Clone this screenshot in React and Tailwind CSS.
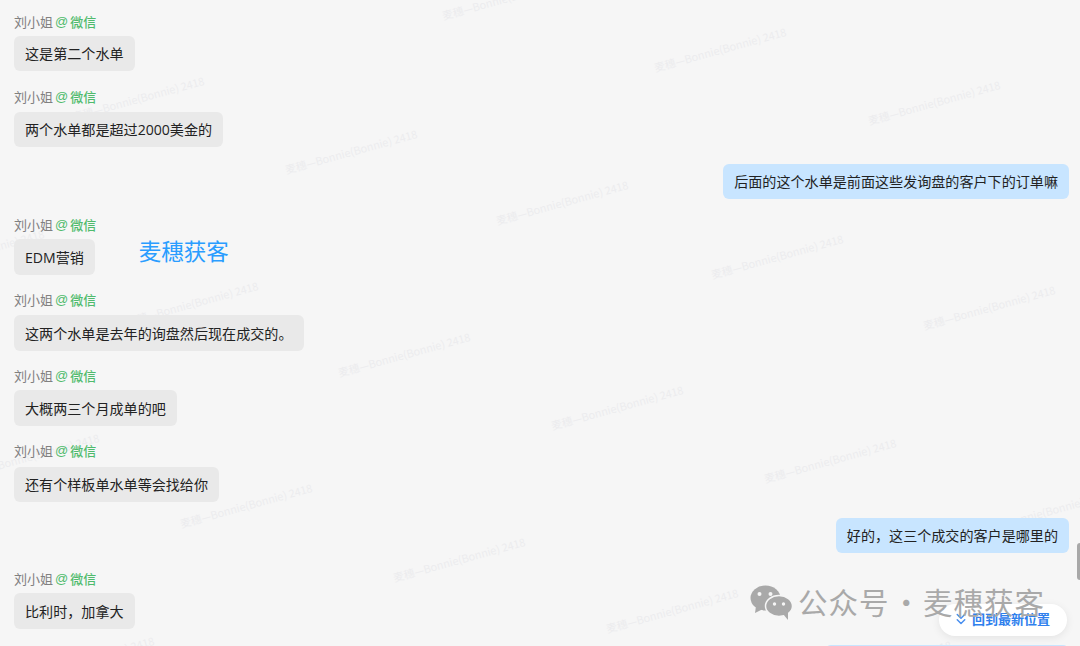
import React from "react";
import { ChevronsDown } from "lucide-react";

const messages = [
  { text: "这是第二个水单", top: "mt-0", gap: "mt-[4px]", h: "h-[35px]" },
  { text: "两个水单都是超过2000美金的", top: "mt-[16px]", gap: "mt-[5px]", h: "h-[35px]" },
  { text: "后面的这个水单是前面这些发询盘的客户下的订单嘛", mine: true, top: "mt-[17px]", h: "h-[35px]" },
  { text: "EDM营销", tag: "麦穗获客", top: "mt-[16px]", gap: "mt-[4px]", h: "h-[36px]" },
  { text: "这两个水单是去年的询盘然后现在成交的。", top: "mt-[15px]", gap: "mt-[5px]", h: "h-[36px]" },
  { text: "大概两三个月成单的吧", top: "mt-[15px]", gap: "mt-[4px]", h: "h-[36px]" },
  { text: "还有个样板单水单等会找给你", top: "mt-[15px]", gap: "mt-[6px]", h: "h-[35px]" },
  { text: "好的，这三个成交的客户是哪里的", mine: true, top: "mt-[16px]", h: "h-[35px]" },
  { text: "比利时，加拿大", top: "mt-[16px]", gap: "mt-[4px]", h: "h-[36px]" },
];

// centres of the tiled watermark
const marks = [
  [508, -3], [720, 49], [934, 102], [138, 98], [351, 151], [562, 202], [777, 256], [989, 307],
  [-22, 251], [192, 303], [404, 354], [617, 407], [830, 460], [1043, 512], [33, 455], [246, 505],
  [459, 559], [672, 610], [885, 662], [88, 658],
];

const Watermark = ({ x, y }) => (
  <div
    className="absolute w-[200px] -ml-[100px] -mt-[9px] h-[18px] leading-[18px] text-center text-[10.8px] text-[#ececee] whitespace-nowrap -rotate-[15.5deg]"
    style={{ left: x, top: y }}
  >
    麦穗—Bonnie(Bonnie) 2418
  </div>
);

const WechatIcon = () => (
  <svg width="44" height="38" viewBox="0 0 44 38" className="shrink-0">
    <ellipse cx="15.5" cy="14" rx="15" ry="12.5" fill="#a9a9a9" />
    <path d="M6 22 L5 29 L13 25 Z" fill="#a9a9a9" />
    <ellipse cx="29" cy="22" rx="13.5" ry="10.5" fill="#a9a9a9" stroke="#f6f6f6" strokeWidth="1.5" />
    <path d="M33 30 L38 36 L38 28 Z" fill="#a9a9a9" />
    <circle cx="9.5" cy="10" r="2" fill="#f6f6f6" />
    <circle cx="20.5" cy="10" r="2" fill="#f6f6f6" />
    <circle cx="24.5" cy="20" r="1.7" fill="#f6f6f6" />
    <circle cx="33.5" cy="20" r="1.7" fill="#f6f6f6" />
  </svg>
);

const Bubble = ({ msg }) => (
  <div
    className={`${msg.h} px-[11px] pt-[1px] flex items-center rounded-md font-['Open_Sans','Noto_Sans_CJK_SC',sans-serif] text-[14.08px] text-[#222] whitespace-nowrap ${
      msg.mine ? "bg-[#c8e5ff]" : "bg-[#e9e9e9]"
    }`}
  >
    {msg.text}
  </div>
);

export default function App() {
  return (
    <div className="relative w-[1080px] h-[646px] overflow-hidden bg-[#f6f6f6] font-['Noto_Sans_CJK_SC','Noto_Sans',sans-serif]">
      {marks.map(([x, y]) => (
        <Watermark key={`${x}-${y}`} x={x} y={y} />
      ))}

      <div className="relative flex flex-col pt-[12px] pl-[14px] pr-[11px]">
        {messages.map((msg) =>
          msg.mine ? (
            <div key={msg.text} className={`flex justify-end ${msg.top}`}>
              <Bubble msg={msg} />
            </div>
          ) : (
            <div key={msg.text} className={msg.top}>
              <div className="flex items-center h-[20px] text-[13px] leading-[20px]">
                <span className="text-[#808080]">刘小姐</span>
                <span className="ml-[2px] text-[#4fbb6c] font-['Liberation_Sans']">@</span>
                <span className="ml-[2px] text-[#4fbb6c] font-medium">微信</span>
              </div>
              <div className={`flex items-center ${msg.gap}`}>
                <Bubble msg={msg} />
                {msg.tag && (
                  <span className="ml-[44px] -translate-y-[7px] text-[22.5px] leading-none text-[#2a9dff]">{msg.tag}</span>
                )}
              </div>
            </div>
          )
        )}
        <div className="flex justify-end mt-[16px]">
          <div className="w-[244px] h-[35px] rounded-md bg-[#c8e5ff]" />
        </div>
      </div>

      {/* back to latest */}
      <div className="absolute left-[939px] top-[604px] w-[128px] h-[32px] rounded-full bg-white shadow-[0_2px_8px_rgba(0,0,0,0.08)] flex items-center pl-[13px] pb-[2px] text-[#2f80ed]">
        <ChevronsDown size={18} strokeWidth={2} className="text-[#4a90f0]" />
        <span className="ml-[2px] text-[13px] font-semibold whitespace-nowrap">回到最新位置</span>
      </div>

      {/* account watermark sits over the button */}
      <div className="absolute left-[750px] top-[584px] flex items-center text-[#a9a9a9] whitespace-nowrap">
        <WechatIcon />
        <div className="flex items-center -mt-[4px] text-[29.5px] leading-[38px]">
          <span className="ml-[4px] tracking-[1px]">公众号</span>
          <span className="mx-[2px]">·</span>
          <span className="tracking-[1px]">麦穗获客</span>
        </div>
      </div>

      {/* scrollbar thumb */}
      <div className="absolute right-0 top-[543px] w-[3px] h-[37px] rounded-l-sm bg-[#a8a8a8]" />
    </div>
  );
}
